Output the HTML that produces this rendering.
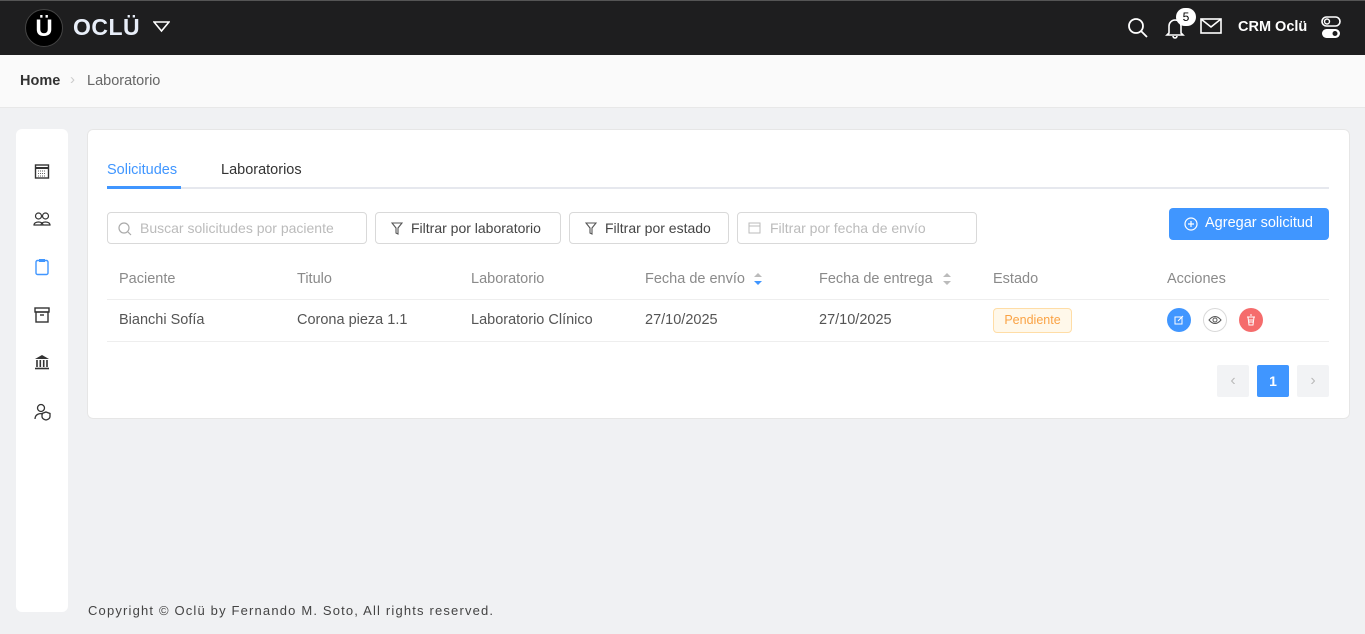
<!DOCTYPE html>
<html><head><meta charset="utf-8"><style>
*{box-sizing:border-box;margin:0;padding:0}
body{width:1365px;height:634px;background:#f0f1f3;font-family:"Liberation Sans",sans-serif;position:relative;overflow:hidden;color:#555}
.top{position:absolute;left:0;top:0;width:1365px;height:55px;background:#1e1e1f;border-top:1px solid #555}
.abs{position:absolute}
.bc{position:absolute;left:0;top:55px;width:1365px;height:53px;background:#fafafa;border-bottom:1px solid #e8e8e8}
.side{position:absolute;left:16px;top:129px;width:52px;height:483px;background:#fff;border-radius:6px}
.card{position:absolute;left:87px;top:129px;width:1263px;height:290px;background:#fff;border-radius:6px;box-shadow:inset 0 0 0 1px #e6e6e6}
.inp{position:absolute;top:83px;height:32px;border:1px solid #d9d9d9;border-radius:4px;font-size:14px;line-height:30px;color:#bbb}
.th{position:absolute;top:142px;font-size:14.5px;color:#8a8a8a}
.td{position:absolute;top:183px;font-size:14.5px;color:#555}
</style></head><body>
<div class="top">
 <div class="abs" style="left:25px;top:8px;width:38px;height:38px;border-radius:50%;background:#000;border:1px solid #444;color:#fff;font-weight:bold;font-size:24px;text-align:center;line-height:37px">Ü</div>
 <div class="abs" style="left:73px;top:13px;color:#e8eef8;font-weight:bold;font-size:23px;letter-spacing:0.5px">OCLÜ</div>
 <svg class="abs" style="left:153px;top:20px" width="17" height="12"><path d="M1 1h15L8.5 10z" fill="none" stroke="#fff" stroke-width="1.6"/></svg>
 <svg class="abs" style="left:1127px;top:16px" width="22" height="22"><circle cx="9" cy="9" r="7" fill="none" stroke="#fff" stroke-width="1.8"/><path d="M14 14l6 6" stroke="#fff" stroke-width="1.8"/></svg>
 <svg class="abs" style="left:1165px;top:15px" width="20" height="24"><path d="M4 17V10a6 6 0 0112 0v7l2 2H2z M8 20a2 2 0 004 0" fill="none" stroke="#fff" stroke-width="1.6"/></svg>
 <div class="abs" style="left:1176px;top:7px;width:20px;height:18px;border-radius:9px;background:#fff;color:#000;font-size:12px;text-align:center;line-height:18px">5</div>
 <svg class="abs" style="left:1200px;top:17px" width="22" height="16"><rect x="1" y="1" width="20" height="14" fill="none" stroke="#fff" stroke-width="1.6"/><path d="M1 1l10 8 10-8" fill="none" stroke="#fff" stroke-width="1.6"/></svg>
 <div class="abs" style="left:1238px;top:18px;color:#fff;font-size:14.5px;font-weight:bold">CRM Oclü</div>
 <svg class="abs" style="left:1321px;top:15px" width="20" height="24"><rect x="1" y="1" width="18" height="9" rx="4.5" fill="none" stroke="#fff" stroke-width="1.6"/><circle cx="6" cy="5.5" r="2.5" fill="none" stroke="#fff" stroke-width="1.4"/><rect x="1" y="13" width="18" height="9" rx="4.5" fill="#fff"/><circle cx="14" cy="17.5" r="2.5" fill="#1e1e1f"/></svg>
</div>
<div class="bc"><span class="abs" style="left:20px;top:18px;font-size:14.5px;font-weight:bold;color:#333">Home</span><span class="abs" style="left:70px;top:16px;color:#ccc;font-size:15px">›</span><span class="abs" style="left:87px;top:18px;font-size:14.5px;color:#666">Laboratorio</span></div>
<div class="side">
 <svg class="abs" style="left:18px;top:34px" width="16" height="16"><rect x="1.5" y="2" width="13" height="13" fill="none" stroke="#333" stroke-width="1.4"/><path d="M1.5 5h13" stroke="#333" stroke-width="2"/><path d="M4 8h8M4 10.5h8M4 13h8" stroke="#666" stroke-dasharray="1 1"/></svg>
 <svg class="abs" style="left:17px;top:82px" width="18" height="16"><circle cx="5.5" cy="5" r="3" fill="none" stroke="#333" stroke-width="1.2"/><circle cx="12.5" cy="5" r="3" fill="none" stroke="#333" stroke-width="1.2"/><path d="M1 14c0-4 9-4 9 0zM8 14c0-4 9-4 9 0z" fill="none" stroke="#333" stroke-width="1.2"/></svg>
 <svg class="abs" style="left:19px;top:129px" width="14" height="18"><rect x="1" y="2.5" width="12" height="14" rx="1.5" fill="none" stroke="#4096ff" stroke-width="1.4"/><rect x="4" y="1" width="6" height="3" fill="#4096ff"/></svg>
 <svg class="abs" style="left:18px;top:178px" width="16" height="16"><rect x="1" y="1" width="14" height="4" fill="none" stroke="#333" stroke-width="1.4"/><rect x="2" y="5" width="12" height="10" fill="none" stroke="#333" stroke-width="1.4"/><path d="M6 8h4" stroke="#333" stroke-width="1.4"/></svg>
 <svg class="abs" style="left:18px;top:225px" width="16" height="16"><path d="M8 1L1 5h14z" fill="#333"/><path d="M3 6v7M6.3 6v7M9.7 6v7M13 6v7" stroke="#333" stroke-width="1.6"/><path d="M1 14.5h14" stroke="#333" stroke-width="1.6"/></svg>
 <svg class="abs" style="left:18px;top:274px" width="18" height="18"><circle cx="7" cy="5" r="3.5" fill="none" stroke="#333" stroke-width="1.3"/><path d="M1 16c0-5 5-6 8-5" fill="none" stroke="#333" stroke-width="1.3"/><path d="M12 9l4 1.5v3c0 2-2 3-4 3.5c-2-.5-4-1.5-4-3.5v-3z" fill="none" stroke="#333" stroke-width="1.3"/></svg>
</div>
<div class="card">
 <div class="abs" style="left:20px;top:33px;font-size:14.5px;color:#4096ff">Solicitudes</div>
 <div class="abs" style="left:134px;top:33px;font-size:14.5px;color:#333">Laboratorios</div>
 <div class="abs" style="left:20px;top:58px;width:1222px;height:2px;background:#e6e8ee"></div>
 <div class="abs" style="left:20px;top:57px;width:74px;height:3px;background:#4096ff"></div>
 <div class="inp" style="left:20px;width:260px;padding-left:32px">Buscar solicitudes por paciente</div>
 <svg class="abs" style="left:31px;top:93px" width="14" height="14"><circle cx="6" cy="6" r="5" fill="none" stroke="#aaa" stroke-width="1.2"/><path d="M10 10l3 3" stroke="#aaa" stroke-width="1.2"/></svg>
 <div class="inp" style="left:288px;width:186px;padding-left:35px;color:#444">Filtrar por laboratorio</div>
 <div class="inp" style="left:482px;width:160px;padding-left:35px;color:#444">Filtrar por estado</div>
 <svg class="abs" style="left:304px;top:93px" width="12" height="13"><path d="M1 1h10L7 6v6L5 11V6z" fill="none" stroke="#555" stroke-width="1.1"/></svg>
 <svg class="abs" style="left:498px;top:93px" width="12" height="13"><path d="M1 1h10L7 6v6L5 11V6z" fill="none" stroke="#555" stroke-width="1.1"/></svg>
 <div class="inp" style="left:650px;width:240px;padding-left:32px">Filtrar por fecha de envío</div>
 <svg class="abs" style="left:661px;top:92px" width="13" height="13"><rect x="1" y="2" width="11" height="10" fill="none" stroke="#bbb"/><path d="M1 5h11" stroke="#bbb"/></svg>
 <div class="abs" style="left:1082px;top:79px;width:160px;height:32px;background:#4096ff;border-radius:4px;color:#fff;font-size:14.5px;line-height:31px;padding-left:36px">Agregar solicitud</div>
 <svg class="abs" style="left:1097px;top:88px" width="14" height="14"><circle cx="7" cy="7" r="6" fill="none" stroke="#fff" stroke-width="1.2"/><path d="M7 4v6M4 7h6" stroke="#fff" stroke-width="1.2"/></svg>
 <div class="th" style="left:32px">Paciente</div><div class="th" style="left:210px">Titulo</div><div class="th" style="left:384px">Laboratorio</div>
 <div class="th" style="left:558px">Fecha de envío</div>
 <svg class="abs" style="left:666px;top:143px" width="10" height="14"><path d="M5 1l4 4H1z" fill="#bbb"/><path d="M5 13l4-4H1z" fill="#4096ff"/></svg>
 <div class="th" style="left:732px">Fecha de entrega</div>
 <svg class="abs" style="left:855px;top:143px" width="10" height="14"><path d="M5 1l4 4H1z" fill="#bbb"/><path d="M5 13l4-4H1z" fill="#bbb"/></svg>
 <div class="th" style="left:906px">Estado</div><div class="th" style="left:1080px">Acciones</div>
 <div class="abs" style="left:20px;top:170px;width:1222px;height:1px;background:#eee"></div>
 <div class="td" style="left:32px">Bianchi Sofía</div><div class="td" style="left:210px">Corona pieza 1.1</div><div class="td" style="left:384px">Laboratorio Clínico</div><div class="td" style="left:558px">27/10/2025</div><div class="td" style="left:732px">27/10/2025</div>
 <div class="abs" style="left:906px;top:179px;width:79px;height:25px;background:#fff7e6;border:1px solid #ffd591;border-radius:4px;color:#fa8c16;font-size:12.5px;text-align:center;line-height:23px;opacity:.8">Pendiente</div>
 <div class="abs" style="left:1080px;top:179px;width:24px;height:24px;border-radius:50%;background:#4096ff"></div>
 <svg class="abs" style="left:1087px;top:186px" width="10" height="10"><rect x="1" y="2" width="7" height="7" fill="none" stroke="#fff"/><path d="M4 6l5-5" stroke="#fff"/></svg>
 <div class="abs" style="left:1116px;top:179px;width:24px;height:24px;border-radius:50%;border:1px solid #d9d9d9"></div>
 <svg class="abs" style="left:1121px;top:186px" width="14" height="10"><path d="M1 5q6-7 12 0q-6 7-12 0z" fill="none" stroke="#555"/><circle cx="7" cy="5" r="2" fill="none" stroke="#555"/></svg>
 <div class="abs" style="left:1152px;top:179px;width:24px;height:24px;border-radius:50%;background:#f56c6c"></div>
 <svg class="abs" style="left:1159px;top:185px" width="10" height="12"><path d="M1 3h8M4 1h2M2 3l1 8h4l1-8M4 5v4M6 5v4" fill="none" stroke="#fff"/></svg>
 <div class="abs" style="left:20px;top:212px;width:1222px;height:1px;background:#eee"></div>
 <div class="abs" style="left:1130px;top:236px;width:32px;height:32px;background:#f2f3f5;border-radius:2px;color:#bbb;text-align:center;line-height:32px">‹</div>
 <div class="abs" style="left:1170px;top:236px;width:32px;height:32px;background:#4096ff;border-radius:2px;color:#fff;font-weight:bold;text-align:center;line-height:32px;font-size:14px">1</div>
 <div class="abs" style="left:1210px;top:236px;width:32px;height:32px;background:#f2f3f5;border-radius:2px;color:#bbb;text-align:center;line-height:32px">›</div>
</div>
<div class="abs" style="left:88px;top:603px;font-size:13px;color:#444;letter-spacing:1.17px">Copyright © Oclü by Fernando M. Soto, All rights reserved.</div>
</body></html>
